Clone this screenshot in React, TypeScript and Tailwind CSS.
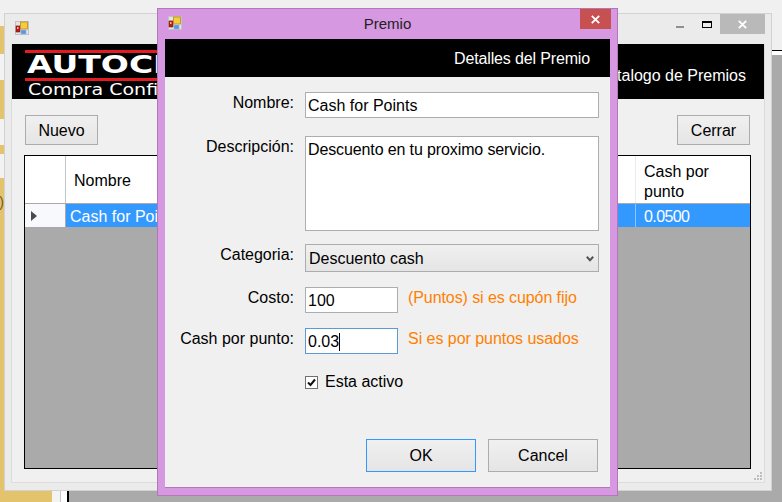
function AppIcon() {
  return (
    <svg width="14" height="14" viewBox="0 0 14 14" className="block shrink-0">
      <rect x="0.5" y="0.5" width="13" height="13" fill="#e4e4e4" stroke="#c2c2c2" />
      <rect x="0" y="4.5" width="14" height="1" fill="#c8c8c8" />
      <rect x="1" y="5" width="4" height="6" fill="#b81c1c" stroke="#8c1212" strokeWidth="0.6" />
      <rect x="2" y="6" width="1.5" height="2" fill="#f2b8a8" />
      <rect x="5.5" y="1" width="7" height="7" fill="#f7cb3c" stroke="#b88c1c" strokeWidth="0.8" />
      <rect x="6" y="9" width="5" height="4" fill="#5d95e3" stroke="#8fb4e8" strokeWidth="0.6" />
    </svg>
  );
}

function CloseGlyph() {
  return (
    <svg width="9" height="9" viewBox="0 0 9 9" className="block">
      <path d="M0.8 0.8 L8.2 8.2 M8.2 0.8 L0.8 8.2" stroke="#ffffff" strokeWidth="1.8" />
    </svg>
  );
}

function FormButton({ label, focused }: { label: string; focused?: boolean }) {
  return (
    <div
      className={`flex w-[110px] h-[33px] items-center justify-center border bg-gradient-to-b from-[#f0f0f0] to-[#e5e5e5] pt-px text-[16px] text-black ${
        focused ? "border-[#3399ff]" : "border-[#acacac]"
      }`}
    >
      {label}
    </div>
  );
}

function ToolButton({ label }: { label: string }) {
  return (
    <div className="flex w-[73px] h-[30px] items-center justify-center border border-[#acacac] bg-gradient-to-b from-[#f0f0f0] to-[#e5e5e5] pt-[2px] text-[16px] text-black">
      {label}
    </div>
  );
}

function Row({ label, mt, children }: { label: string; mt: string; children: React.ReactNode }) {
  return (
    <div className={`flex items-start ${mt}`}>
      <div className="w-[129px] shrink-0 pt-[2px] text-right leading-[18px]">{label}</div>
      <div className="ml-[11px] flex items-start">{children}</div>
    </div>
  );
}

export default function App() {
  return (
    <div className="relative w-[782px] h-[502px] overflow-hidden bg-[#f0f0f0] text-[16px] text-black [font-family:'Liberation_Sans',Arial,sans-serif]">
      {/* Desktop: strip of the window behind, on the left */}
      <div className="absolute left-0 top-[26px] flex h-[476px] w-[52px] flex-col">
        <div className="h-[28px] w-[4px] bg-[#e3c36b]" />
        <div className="h-[26px] w-[4px] bg-[#f2f2f2]" />
        <div className="h-[39px] w-[4px] bg-[#e3c36b]" />
        <div className="h-[26px] w-[4px] bg-[#f2f2f2]" />
        <div className="h-[9px] w-[4px] bg-[#e3c36b]" />
        <div className="h-[24px] w-[4px] bg-[#f2f2f2]" />
        <div className="relative h-[313px] w-[4px] overflow-hidden bg-[#e3c36b]">
          <span className="absolute right-0 top-[16px] text-[14px] leading-[16px] text-[#6b5a2c]">)</span>
        </div>
        <div className="h-[11px] w-[52px] bg-[#e3c36b]" />
      </div>

      {/* Desktop: window behind, right and bottom */}
      <div className="absolute left-[52px] top-[491px] h-[11px] w-[8px] bg-[#f3f3f3]" />
      <div className="absolute left-[60px] top-[491px] h-[11px] w-[7px] border-l border-[#c8c8c8] bg-white" />
      <div className="absolute left-[67px] right-0 top-[50px] bottom-0 border-l-2 border-t border-black bg-white pt-[4px]">
        <div className="h-full w-full bg-[#aaaaaa]" />
      </div>

      {/* Main window */}
      <div className="absolute left-[4px] top-[13px] flex h-[478px] w-[768px] flex-col border border-[#d2d2d2] bg-[#ebebeb]">
        <div className="flex h-[30px] shrink-0 items-start">
          <div className="ml-[10px] mt-[7px]">
            <AppIcon />
          </div>
          <div className="ml-auto flex items-start">
            <div className="mr-[18px] mt-[12px] h-[2px] w-[8px] bg-[#8f8f8f]" />
            <div className="mr-[8px] mt-[7px] h-[7px] w-[10px] border border-t-2 border-black" />
            <div className="mr-[6px] flex h-[20px] w-[45px] items-center justify-center bg-[#b9b9b9]">
              <CloseGlyph />
            </div>
          </div>
        </div>
        <div className="mx-[6px] mb-[7px] flex min-h-0 flex-1 flex-col border-b border-l border-r border-[#dcdcdc] bg-[#f0f0f0]">
          <div className="flex h-[55px] shrink-0 bg-black text-white">
            <div className="relative w-[300px] overflow-hidden">
              <div className="absolute left-[13px] right-0 top-[6px] h-[3px] bg-[#e21c22]" />
              <div className="absolute left-[15px] top-[8px] origin-left scale-x-[1.32] whitespace-nowrap text-[25px] font-bold leading-[25px] [font-family:'DejaVu_Sans',sans-serif]">
                AUTOCE
              </div>
              <div className="absolute left-[13px] right-0 top-[34px] h-[3px] bg-[#e21c22]" />
              <div className="absolute left-[16px] top-[37px] origin-left scale-x-[1.27] whitespace-nowrap text-[15px] leading-[18px] [font-family:'DejaVu_Sans',sans-serif]">
                Compra Confi
              </div>
            </div>
            <div className="ml-auto mr-[18px] mt-[23px] whitespace-nowrap leading-[18px]">Catalogo de Premios</div>
          </div>
          <div className="flex shrink-0 justify-between pl-[13px] pr-[14px] pt-[16px]">
            <ToolButton label="Nuevo" />
            <ToolButton label="Cerrar" />
          </div>
          <div className="ml-[12px] mr-[13px] mt-[10px] flex h-[314px] flex-col border border-black bg-[#aaaaaa]">
            <div className="flex h-[48px] shrink-0 border-b border-[#a9a9a9] bg-white">
              <div className="w-[41px] shrink-0 border-r border-[#c4c4c4]" />
              <div className="flex-1 self-center pl-[8px] pt-[3px]">Nombre</div>
              <div className="w-[115px] shrink-0 border-l border-[#ececec] pl-[8px] pt-[6px] leading-[20px]">
                Cash por
                <br />
                punto
              </div>
            </div>
            <div className="flex h-[24px] shrink-0 border-b border-[#a9a9a9]">
              <div className="flex w-[41px] shrink-0 items-center border-r border-[#a9a9a9] bg-[#f8f9fc] pl-[6px]">
                <svg width="6" height="10" viewBox="0 0 6 10" className="block">
                  <path d="M0 0 L6 5 L0 10 Z" fill="#4a4a4a" />
                </svg>
              </div>
              <div className="flex flex-1 items-center bg-[#3399ff] pl-[4px] pt-[3px] text-white">Cash for Points</div>
              <div className="flex w-[115px] shrink-0 items-center border-l border-[#8cc4fb] bg-[#3399ff] pl-[8px] pt-[3px] tracking-[-0.6px] text-white">
                0.0500
              </div>
            </div>
          </div>
          <div className="relative mt-auto h-[11px] shrink-0">
            <svg width="8" height="8" viewBox="0 0 8 8" className="absolute bottom-[2px] right-[2px] block">
              <path d="M6 0h2v2h-2zM3 3h2v2h-2zM6 3h2v2h-2zM0 6h2v2h-2zM3 6h2v2h-2zM6 6h2v2h-2z" fill="#bdbdbd" />
            </svg>
          </div>
        </div>
      </div>

      {/* Dialog */}
      <div className="absolute left-[157px] top-[8px] flex h-[488px] w-[461px] flex-col border border-[#b377b8] bg-[#d698e0]">
        <div className="relative flex h-[30px] shrink-0 items-start justify-center">
          <div className="absolute left-[10px] top-[7px]">
            <AppIcon />
          </div>
          <div className="mt-[6px] text-[15px] leading-[18px] text-[#222222]">Premio</div>
          <div className="absolute right-[6px] top-0 flex h-[20px] w-[31px] items-center justify-center bg-[#c75050]">
            <CloseGlyph />
          </div>
        </div>
        <div className="mx-[7px] mb-[7px] flex min-h-0 flex-1 flex-col border-b border-[#b377b8] bg-[#f0f0f0]">
          <div className="flex h-[38px] shrink-0 items-center justify-end bg-black pr-[20px] pt-[1px] tracking-[-0.15px] text-white">
            Detalles del Premio
          </div>
          <Row label="Nombre:" mt="mt-[15px]">
            <div className="flex h-[26px] w-[294px] items-center border border-[#abadb3] bg-white pl-[2px] pt-[2px]">
              Cash for Points
            </div>
          </Row>
          <Row label="Descripción:" mt="mt-[18px]">
            <div className="h-[95px] w-[294px] border border-[#abadb3] bg-white pl-[2px] pt-[4px] leading-[18px] tracking-[-0.12px]">
              Descuento en tu proximo servicio.
            </div>
          </Row>
          <Row label="Categoria:" mt="mt-[13px]">
            <div className="flex h-[28px] w-[294px] items-center justify-between border border-[#acacac] bg-gradient-to-b from-[#f0f0f0] to-[#e5e5e5] pl-[3px] pr-[4px] pt-[2px]">
              <span>Descuento cash</span>
              <svg width="8" height="6" viewBox="0 0 8 6" className="block">
                <path d="M0.8 0.8 L4 4.2 L7.2 0.8" fill="none" stroke="#555555" strokeWidth="2" />
              </svg>
            </div>
          </Row>
          <Row label="Costo:" mt="mt-[15px]">
            <div className="flex h-[26px] w-[93px] items-center border border-[#abadb3] bg-white pl-[2px] pt-[2px]">100</div>
            <div className="ml-[10px] mt-[2px] whitespace-nowrap leading-[18px] tracking-[-0.08px] text-[#ff8000]">
              (Puntos) si es cupón fijo
            </div>
          </Row>
          <Row label="Cash por punto:" mt="mt-[15px]">
            <div className="flex h-[26px] w-[93px] items-center border border-[#5b9bd5] bg-white pl-[2px] pt-[2px]">
              0.03
              <span className="h-[18px] w-px bg-black" />
            </div>
            <div className="ml-[10px] mt-[2px] whitespace-nowrap leading-[18px] tracking-[-0.04px] text-[#ff8000]">
              Si es por puntos usados
            </div>
          </Row>
          <div className="ml-[140px] mt-[18px] flex h-[20px] items-center">
            <div className="flex h-[13px] w-[13px] items-center justify-center border border-[#707070] bg-white">
              <svg width="9" height="9" viewBox="0 0 9 9" className="block">
                <path d="M1 4.5 L3.5 7 L8 1.5" fill="none" stroke="#111111" strokeWidth="2" />
              </svg>
            </div>
            <span className="ml-[7px] leading-[18px]">Esta activo</span>
          </div>
          <div className="mt-auto flex justify-end gap-[12px] pb-[15px] pr-[12px]">
            <FormButton label="OK" focused />
            <FormButton label="Cancel" />
          </div>
        </div>
      </div>
    </div>
  );
}
